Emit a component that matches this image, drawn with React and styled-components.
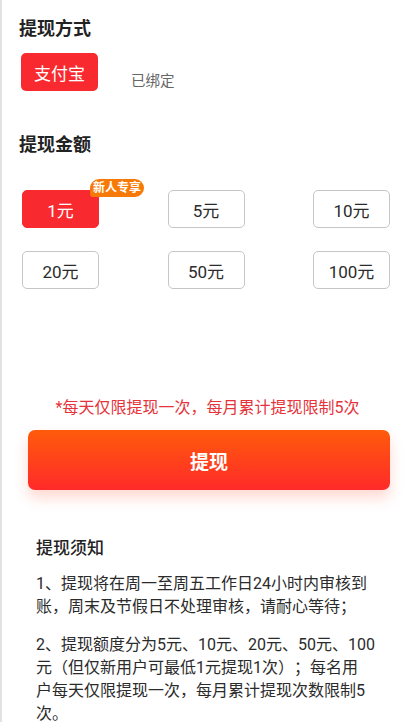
import React from 'react'
import styled, { createGlobalStyle } from 'styled-components'

const GlobalStyle = createGlobalStyle`
  html, body {
    margin: 0;
    padding: 0;
    background: #fff;
  }
  body {
    font-family: Roboto, "Noto Sans CJK SC", sans-serif;
    -webkit-font-smoothing: antialiased;
    text-spacing-trim: space-all;
  }
`

const Page = styled.div`
  min-height: 722px;
  border-left: 2px solid #e2e2e2;
  box-sizing: border-box;
  overflow: hidden;
`

const Section = styled.section`
  padding: 0 17px;
`

const Title = styled.h3`
  margin: ${({ $top }) => $top}px 0 0;
  font-size: 18px;
  line-height: 24px;
  font-weight: 700;
  color: #222;
`

const PayRow = styled.div`
  display: flex;
  align-items: flex-end;
  margin-top: 12px;
  padding-left: 2px;
`

const PayButton = styled.div`
  width: 77px;
  height: 38px;
  border-radius: 5px;
  background: #f92a2f;
  color: #fff;
  font-size: 17px;
  display: flex;
  align-items: center;
  justify-content: center;
`

const Bound = styled.span`
  margin-left: 33px;
  margin-bottom: 1px;
  font-size: 14.5px;
  color: #666;
`

const AmountGrid = styled.div`
  display: grid;
  grid-template-columns: repeat(3, 77px);
  justify-content: space-between;
  row-gap: 23px;
  margin: 33px 6px 0 3px;
`

const Amount = styled.div`
  position: relative;
  height: 38px;
  box-sizing: border-box;
  border-radius: 5px;
  border: 1px solid ${({ $active }) => ($active ? '#f92a2f' : '#c6c6c6')};
  background: ${({ $active }) => ($active ? '#f92a2f' : '#fff')};
  color: ${({ $active }) => ($active ? '#fff' : '#2b2b2b')};
  font-size: 17px;
  display: flex;
  align-items: center;
  justify-content: center;
`

const Badge = styled.span`
  position: absolute;
  left: 67px;
  top: -12px;
  padding: 0 3px;
  height: 18px;
  line-height: 18px;
  border-radius: 9px 9px 9px 3px;
  background: #f77a08;
  color: #fff;
  font-size: 12px;
  font-weight: 700;
  white-space: nowrap;
`

const Notice = styled.p`
  margin: 110px 0 0;
  text-align: center;
  font-size: 16px;
  line-height: 18px;
  color: #e5333b;
`

const Submit = styled.button`
  display: block;
  width: 362px;
  height: 60px;
  margin: 13px 0 0 26px;
  border: none;
  border-radius: 7px;
  background: linear-gradient(180deg, #ff5b0b 0%, #ff2a2a 100%);
  box-shadow: 0 8px 14px rgba(255, 80, 50, 0.22);
  color: #fff;
  font-family: inherit;
  font-size: 19px;
  font-weight: 700;
`

const Notes = styled.div`
  padding: 0 35px 0 34px;
  margin-top: 46px;
`

const NotesTitle = styled.h4`
  margin: 0;
  font-size: 17px;
  line-height: 24px;
  font-weight: 500;
  color: #222;
`

const NotesText = styled.p`
  margin: ${({ $top }) => $top}px 0 0;
  font-size: 16px;
  line-height: 22.7px;
  color: #2b2b2b;
`

const amounts = [1, 5, 10, 20, 50, 100]

const App = () => {
  return (
    <Page>
      <GlobalStyle />
      <Section>
        <Title $top={17}>提现方式</Title>
        <PayRow>
          <PayButton>支付宝</PayButton>
          <Bound>已绑定</Bound>
        </PayRow>

        <Title $top={42}>提现金额</Title>
        <AmountGrid>
          {amounts.map((a, i) => (
            <Amount key={a} $active={i === 0}>
              {a}元
              {i === 0 && <Badge>新人专享</Badge>}
            </Amount>
          ))}
        </AmountGrid>
      </Section>

      <Notice>*每天仅限提现一次，每月累计提现限制5次</Notice>
      <Submit>提现</Submit>

      <Notes>
        <NotesTitle>提现须知</NotesTitle>
        <NotesText $top={13}>
          1、提现将在周一至周五工作日24小时内审核到账，周末及节假日不处理审核，请耐心等待；
        </NotesText>
        <NotesText $top={16}>
          2、提现额度分为5元、10元、20元、50元、100元（但仅新用户可最低1元提现1次）；每名用<br />户每天仅限提现一次，每月累计提现次数限制5次。
        </NotesText>
      </Notes>
    </Page>
  )
}

export default App
